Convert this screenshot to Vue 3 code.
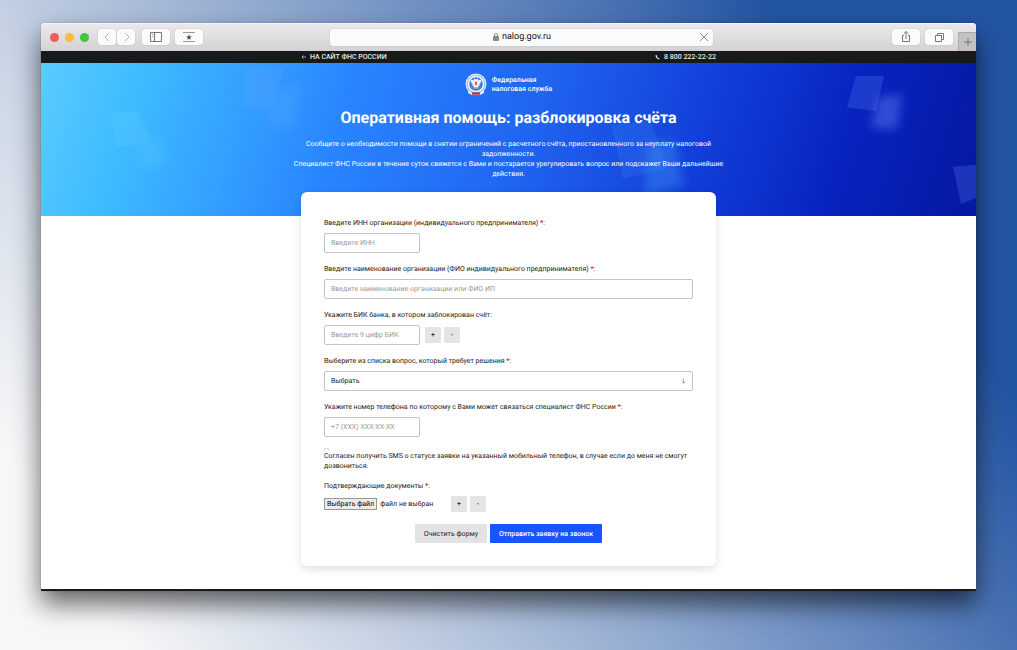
<script setup>
import { ref } from 'vue'

const inn = ref('')
const company = ref('')
const bik = ref('')
const question = ref('')
const phone = ref('')
const sms = ref(false)
</script>

<template>
  <div class="desktop">
    <div class="window">
      <header class="toolbar">
        <div class="side">
          <div class="lights"><i class="red"></i><i class="yellow"></i><i class="green"></i></div>
          <div class="pair">
            <button type="button" class="tool" aria-label="Назад">
              <svg width="18" height="16" viewBox="0 0 18 16"><path d="M11 4 7 8l4 4" stroke="#b4b4b6" /></svg>
            </button>
            <button type="button" class="tool" aria-label="Вперёд">
              <svg width="18" height="16" viewBox="0 0 18 16"><path d="m8 4 4 4-4 4" stroke="#b4b4b6" /></svg>
            </button>
          </div>
          <button type="button" class="tool wide" aria-label="Боковая панель">
            <svg width="18" height="16" viewBox="0 0 18 16"><path d="M3.500 3.500h11v9h-11zM7.500 3.500v9" stroke="#777" /><path d="M5 5.500h1.500M5 7.500h1.500" stroke="#aaa" /></svg>
          </button>
          <button type="button" class="tool wide" aria-label="Избранное">
            <svg width="18" height="16" viewBox="0 0 18 16"><path d="M3 3.500h12M3 12.500h12" stroke="#999" /><path d="m9 5.300.8 1.900 2 .2-1.500 1.300.4 2L9 9.700l-1.700 1 .4-2-1.500-1.300 2-.2z" fill="#555" /></svg>
          </button>
        </div>
        <div class="address">
          <svg class="lock" width="8" height="10" viewBox="0 0 8 10"><path d="M2.500 5V3a1.500 1.500 0 0 1 3 0v2" stroke="#8a8a8a" /><rect x="1" y="4" width="6" height="5" rx="1" fill="#8a8a8a" /></svg>
          <span>nalog.gov.ru</span>
          <button type="button" class="stop" aria-label="Остановить">
            <svg width="10" height="10" viewBox="0 0 10 10"><path d="m1 1 8 8M9 1 1 9" stroke="#888" /></svg>
          </button>
        </div>
        <div class="side right">
          <button type="button" class="tool wide" aria-label="Поделиться">
            <svg width="18" height="16" viewBox="0 0 18 16"><path d="M7 6.500H5.500v6h7v-6H11M9 10V2.500M6.800 4.700 9 2.500l2.200 2.200" stroke="#777" /></svg>
          </button>
          <button type="button" class="tool wide" aria-label="Вкладки">
            <svg width="18" height="16" viewBox="0 0 18 16"><path d="M5.500 6.500h6v6h-6zM7.500 6V4.500h6v6H12" stroke="#777" /></svg>
          </button>
          <button type="button" class="newtab" aria-label="Новая вкладка">
            <svg width="10" height="10" viewBox="0 0 10 10"><path d="M5 1v8M1 5h8" stroke="#777" /></svg>
          </button>
        </div>
      </header>

      <nav class="topbar">
        <div class="column topline">
          <a href="#"><svg width="5" height="6" viewBox="0 0 5 6"><path d="M5 3H1M2.500 1.500 1 3l1.500 1.500" stroke="#ccc" stroke-width=".7" /></svg>НА САЙТ ФНС РОССИИ</a>
          <a href="tel:88002222222"><svg width="5" height="6" viewBox="0 0 5 6"><path d="M1 .7C.2 1.500.6 3 1.700 4.200 2.800 5.300 4 5.600 4.600 5L3.700 3.900l-.8.3L1.800 2.800l.4-.8z" fill="#fff" /></svg>8 800 222-22-22</a>
        </div>
      </nav>

      <section class="hero">
        <svg class="shapes" viewBox="0 0 935 152" preserveAspectRatio="none">
          <defs><filter id="soft" x="-60%" y="-60%" width="220%" height="220%"><feGaussianBlur stdDeviation="5" /></filter></defs>
          <path d="m205 4 38 1-13 42-29-4z" fill="#64a8ff" opacity=".22" />
          <path d="m232 28 27-7-7 44-30-2z" fill="#45a0ff" opacity=".5" filter="url(#soft)" />
          <path d="m70 49 28-1 13 31-35 5z" fill="#66d0ff" opacity=".22" />
          <path d="m92 79 27-7 6 28-25 6z" fill="#4cc0ff" opacity=".45" filter="url(#soft)" />
          <path d="m571 62 39-5 16 48-44 10z" fill="#4a9aff" opacity=".17" />
          <path d="m606 80 28-3 8 45-38 10z" fill="#3f95f5" opacity=".4" filter="url(#soft)" />
          <path d="m815 13 28 0-8 35-29-4z" fill="#6a90ff" opacity=".22" />
          <path d="m837 34 24-3-5 35-26-2z" fill="#6a88ff" opacity=".42" filter="url(#soft)" />
          <path d="m912 103 23-2v33l-15 6z" fill="#6a88ff" opacity=".24" />
        </svg>
        <div class="column intro">
          <div class="brand">
            <svg width="22" height="24" viewBox="0 0 22 24">
              <circle cx="11" cy="11" r="10.500" fill="#dfe9f8" />
              <circle cx="11" cy="11" r="8.700" stroke="#8db2e6" stroke-width="1.200" stroke-dasharray="1.500 .7" />
              <circle cx="11" cy="11" r="7.300" fill="#3d7fd6" stroke="#fff" />
              <path d="M11 7 9.800 5.500 8.500 6.500l1 1L6 6.800 5.500 8l1 .4-.8.8 1.200.4-.5.9 1.500.2L7 13l2-.8-.5 2.300 1.500-.5 1 1.800 1-1.800 1.500.5-.5-2.300 2 .8-.9-2.300 1.500-.2-.5-.9 1.200-.4-.8-.8 1-.4-.5-1.200-3.500.7 1-1-1.300-1z" fill="#fff" />
              <path d="M9.700 8.500h2.600v3L11 12.800 9.700 11.500z" fill="#d66a68" />
              <path d="M8 14.200h6v1.300H8z" fill="#cfa987" />
              <path d="m3 18 4 2.300h8l4-2.300v2l-4 2H7l-4-2z" fill="#e7effb" />
              <path d="M7 19.500h8v3H7z" fill="#e05263" /><path d="M7 19.500h8v1H7z" fill="#334f9c" />
            </svg>
            <span>Федеральная<br />налоговая служба</span>
          </div>
          <h1>Оперативная помощь: разблокировка счёта</h1>
          <p>Сообщите о необходимости помощи в снятии ограничений с расчетного счёта, приостановленного за неуплату налоговой<br />задолженности.<br />Специалист ФНС России в течение суток свяжется с Вами и постарается урегулировать вопрос или подскажет Ваши дальнейшие<br />действия.</p>
        </div>
      </section>

      <main class="page">
        <form class="column card" @submit.prevent>
          <div class="field">
            <label for="inn">Введите ИНН организации (индивидуального предпринимателя) <b>*</b>:</label>
            <input id="inn" v-model="inn" class="short" type="text" placeholder="Введите ИНН" />
          </div>
          <div class="field">
            <label for="company">Введите наименование организации (ФИО индивидуального предпринимателя) <b>*</b>:</label>
            <input id="company" v-model="company" type="text" placeholder="Введите наименование организации или ФИО ИП" />
          </div>
          <div class="field">
            <label for="bik">Укажите БИК банка, в котором заблокирован счёт:</label>
            <div class="line">
              <input id="bik" v-model="bik" class="short" type="text" placeholder="Введите 9 цифр БИК" />
              <div class="steps"><button type="button">+</button><button type="button">-</button></div>
            </div>
          </div>
          <div class="field">
            <label for="question">Выберите из списка вопрос, который требует решения <b>*</b>:</label>
            <div class="select">
              <select id="question" v-model="question"><option value="">Выбрать</option></select>
              <svg width="5" height="6" viewBox="0 0 5 6"><path d="M2.500.5v4.500M.7 3.400l1.800 1.800 1.800-1.800" stroke="#888" stroke-width=".7" /></svg>
            </div>
          </div>
          <div class="field">
            <label for="phone">Укажите номер телефона по которому с Вами может связаться специалист ФНС России <b>*</b>:</label>
            <input id="phone" v-model="phone" class="short" type="tel" placeholder="+7 (XXX) XXX-XX-XX" />
          </div>
          <div class="consent">
            <input id="sms" v-model="sms" type="checkbox" />
            <label for="sms">Согласен получить SMS о статусе заявки на указанный мобильный телефон, в случае если до меня не смогут дозвониться.</label>
          </div>
          <div class="docs">
            <span>Подтверждающие документы <b>*</b>:</span>
            <div class="line">
              <div class="file">
                <input id="file" type="file" />
                <label for="file">Выбрать файл</label>
                <span>файл не выбран</span>
              </div>
              <div class="steps"><button type="button">+</button><button type="button">-</button></div>
            </div>
          </div>
          <div class="actions">
            <button type="reset">Очистить форму</button>
            <button type="submit" class="primary">Отправить заявку на звонок</button>
          </div>
        </form>
      </main>
    </div>
  </div>
</template>

<style>
body {
  background: #fff;
}
</style>

<style scoped>
* {
  box-sizing: border-box;
}
svg {
  display: block;
  fill: none;
  flex: none;
}
button,
input,
select {
  margin: 0;
  padding: 0;
  border: 0;
  font: inherit;
  color: inherit;
  text-rendering: inherit;
}
a {
  color: inherit;
  text-decoration: none;
}
.desktop {
  min-height: 100vh;
  padding: 23px 41px 59px;
  display: flex;
  font: 7px/10px Roboto, 'Liberation Sans', sans-serif;
  text-rendering: geometricPrecision;
  color: #222;
  background: linear-gradient(58deg, #f7f7f7 9%, #c5d1e3 28%, #93abd0 46%, #4a73b4 71%, #2455a3 82%);
}
.window {
  flex: 1;
  min-width: 0;
  display: flex;
  flex-direction: column;
  background: #fff;
  border-bottom: 2px solid #17191a;
  border-radius: 4px 4px 1px 1px;
  box-shadow: 0 0 1px rgba(0, 0, 0, 0.5), 0 13px 26px rgba(0, 0, 0, 0.6);
}
.toolbar {
  height: 28px;
  display: flex;
  align-items: center;
  border-radius: 4px 4px 0 0;
  background: linear-gradient(#ebe9eb, #d5d2d5);
  box-shadow: inset 0 1px #f6f6f8;
}
.side {
  flex: 1;
  display: flex;
  align-items: center;
  gap: 5px;
  padding-left: 9px;
}
.right {
  height: 28px;
  justify-content: flex-end;
}
.lights {
  display: flex;
  gap: 6px;
  margin-right: 4px;
}
.lights i {
  width: 9px;
  height: 9px;
  border-radius: 50%;
}
.red {
  background: #ee5f57;
}
.yellow {
  background: #f6bd3a;
}
.green {
  background: #40c840;
}
.pair {
  display: flex;
  gap: 1px;
  margin-right: 2px;
}
.tool {
  height: 16px;
  display: flex;
  align-items: center;
  justify-content: center;
  border-radius: 3px;
  background: #fbfbfb;
  box-shadow: 0 0 1px rgba(0, 0, 0, 0.35);
}
.wide {
  width: 28px;
}
.newtab {
  width: 18px;
  height: 19px;
  display: flex;
  align-items: center;
  justify-content: center;
  align-self: flex-end;
  border-left: 1px solid #aaa;
  border-top: 1px solid #aaa;
  background: #c3c1c4;
}
.address {
  position: relative;
  width: 41%;
  height: 17px;
  margin-left: 26px;
  display: flex;
  align-items: center;
  justify-content: center;
  gap: 2px;
  border-radius: 3px;
  background: #fbfbfb;
  box-shadow: 0 0 1px rgba(0, 0, 0, 0.35);
  font: 9px/12px Roboto, sans-serif;
  color: #111;
}
.stop {
  position: absolute;
  right: 4px;
  background: none;
}
.topbar {
  background: #17191a;
  color: #e8e8e8;
  font-weight: 500;
}
.column {
  width: 415px;
  max-width: 100%;
  margin: 0 auto;
}
.topline {
  height: 12px;
  display: flex;
  align-items: center;
  justify-content: space-between;
}
.topline a {
  display: flex;
  align-items: center;
  gap: 4px;
}
.hero {
  position: relative;
  padding-bottom: 37px;
  color: #fff;
  text-align: center;
  background: linear-gradient(107deg, #5ccbff 0%, #3fbcff 10%, #2884ff 33%, #2064f0 52%, #1240da 69%, #0824c0 84%, #0418a0 100%);
}
.shapes {
  position: absolute;
  inset: 0;
  width: 100%;
  height: 100%;
}
.intro {
  position: relative;
  padding-top: 10px;
}
.brand {
  display: flex;
  align-items: center;
  justify-content: center;
  gap: 5px;
  text-align: left;
  font-weight: 500;
  line-height: 9px;
}
h1 {
  margin: 10px 0 0;
  font-size: 16px;
  line-height: 22px;
  font-weight: 700;
}
p {
  display: flow-root;
  margin: 10px -20px 0;
}
.page {
  flex: 1;
  padding-bottom: 23px;
}
.card {
  position: relative;
  margin-top: -24px;
  padding: 26px 23px 23px;
  border-radius: 6px;
  background: #fff;
  box-shadow: 0 3px 9px rgba(0, 0, 0, 0.13);
}
.field {
  margin-bottom: 11px;
}
.field > label {
  display: block;
  margin-bottom: 5px;
}
b {
  color: #e0152b;
}
input[type='text'],
input[type='tel'],
select {
  display: block;
  width: 100%;
  height: 20px;
  padding: 0 6px;
  border: 1px solid #c4c4c6;
  border-radius: 2px;
  background: #fff;
}
input.short {
  width: 96px;
}
input::placeholder {
  color: #999;
  opacity: 1;
}
.select {
  position: relative;
}
select {
  appearance: none;
}
.select svg {
  position: absolute;
  right: 7px;
  top: 7px;
}
.line {
  display: flex;
  align-items: center;
  gap: 5px;
}
.steps {
  display: flex;
  gap: 3px;
}
.steps button {
  width: 16px;
  height: 16px;
  border-radius: 1px;
  background: #e4e4e7;
  font-weight: 500;
}
.consent {
  margin-bottom: 10px;
}
.consent input {
  display: block;
  appearance: none;
  width: 5px;
  height: 3px;
  border: 1px solid #ddd;
  border-bottom: 0;
  border-radius: 1px;
}
.consent label {
  display: block;
}
.docs .line {
  margin-top: 5px;
}
.file {
  position: relative;
  width: 122px;
  display: flex;
  align-items: center;
  gap: 3px;
}
.file input {
  position: absolute;
  width: 1px;
  height: 1px;
  opacity: 0;
}
.file label {
  padding: 0 2px;
  border: 1px solid #999;
  background: #ececec;
  color: #000;
}
.actions {
  display: flex;
  justify-content: center;
  gap: 3px;
  margin-top: 12px;
}
.actions button {
  height: 19px;
  padding: 0 9px;
  border-radius: 1px;
  background: #e3e3e6;
}
.actions .primary {
  background: #1755ff;
  color: #fff;
  font-weight: 500;
}
</style>
